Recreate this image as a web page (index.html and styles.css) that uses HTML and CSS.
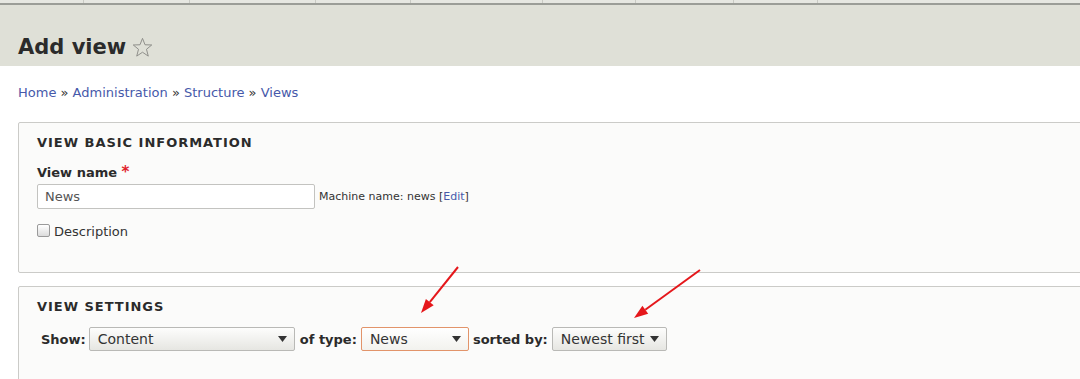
FILE: index.html
```
<!DOCTYPE html>
<html lang="en">
<head>
<meta charset="utf-8">
<title>Add view</title>
<link rel="stylesheet" href="styles.css">
</head>
<body>
<div class="tabs">
  <span class="tab w1"></span><span class="tab w2"></span><span class="tab w3"></span><span class="tab w4"></span><span class="tab w5"></span><span class="tab w6"></span><span class="tab w7"></span><span class="tab w8"></span>
</div>
<header class="page-header">
  <h1 class="title">Add view <svg class="star" width="21" height="21" viewBox="0 0 20 20"><polygon points="10,1.3 12.4,7.4 18.8,7.6 13.8,11.7 15.5,18.2 10,14.5 4.5,18.2 6.2,11.7 1.2,7.6 7.6,7.4" fill="none" stroke="#8a8a86" stroke-width="0.9"/></svg></h1>
</header>
<nav class="breadcrumb"><a href="#">Home</a> » <a href="#">Administration</a> » <a href="#">Structure</a> » <a href="#">Views</a></nav>

<section class="panel panel-basic">
  <h2 class="legend">View basic information</h2>
  <div class="label">View name <span class="req">*</span></div>
  <div class="name-row">
    <div class="text-input">News</div>
    <span class="machine">Machine name: news [<a href="#">Edit</a>]</span>
  </div>
  <div class="check-row"><span class="checkbox"></span><span>Description</span></div>
</section>

<section class="panel panel-settings">
  <h2 class="legend">View settings</h2>
  <div class="settings-row">
    <span class="inline-label first">Show:</span>
    <div class="select s-show"><span>Content</span><svg width="9" height="6" viewBox="0 0 9 6"><polygon points="0,0 9,0 4.5,6" fill="#333"/></svg></div>
    <span class="inline-label type">of type:</span>
    <div class="select s-type focus"><span>News</span><svg width="9" height="6" viewBox="0 0 9 6"><polygon points="0,0 9,0 4.5,6" fill="#333"/></svg></div>
    <span class="inline-label">sorted by:</span>
    <div class="select s-sort"><span>Newest first</span><svg width="9" height="6" viewBox="0 0 9 6"><polygon points="0,0 9,0 4.5,6" fill="#333"/></svg></div>
  </div>
</section>

<svg class="arrows" width="1080" height="379" viewBox="0 0 1080 379">
  <line x1="458" y1="267" x2="429.8" y2="302.1" stroke="#e5171b" stroke-width="2"/>
  <polygon points="421,313 433.7,305.2 425.9,299" fill="#e5171b"/>
  <line x1="700" y1="270" x2="645.3" y2="309.8" stroke="#e5171b" stroke-width="2"/>
  <polygon points="634,318 648.2,313.8 642.4,305.8" fill="#e5171b"/>
</svg>
</body>
</html>
```
FILE: styles.css
```
html, body {
  margin: 0;
  padding: 0;
}
body {
  position: relative;
  overflow: hidden;
  width: 1080px;
  height: 379px;
  background: #ffffff;
  font-family: "DejaVu Sans", "Liberation Sans", sans-serif;
  color: #333;
  font-size: 13px;
}
.tabs {
  display: flex;
  height: 3px;
  background: #e6e7e1;
  border-bottom: 2px solid #9b9d97;
}
.tab {
  border-right: 1px solid #c9cac4;
  flex: none;
}
.w1 { width: 83px; }
.w2 { width: 105px; }
.w3 { width: 125px; }
.w4 { width: 94px; }
.w5 { width: 131px; }
.w6 { width: 92px; }
.w7 { width: 97px; }
.w8 { width: 83px; }

.page-header {
  background: #dfe0d7;
  height: 61px;
  box-sizing: border-box;
  padding: 29px 18px 0;
}
.title {
  margin: 0;
  font-size: 21px;
  line-height: 26px;
  font-weight: bold;
  color: #2b2b2b;
  display: flex;
  align-items: center;
  gap: 6px;
}
.breadcrumb {
  margin: 18px 18px 0;
  font-size: 13px;
  line-height: 18px;
  color: #333;
}
a {
  color: #4659aa;
  text-decoration: none;
}
.panel {
  margin-left: 18px;
  margin-right: -40px;
  border: 1px solid #cbcbc8;
  background: #fbfbfa;
  border-radius: 2px;
  box-sizing: border-box;
}
.panel-basic {
  margin-top: 20px;
  height: 151px;
  padding: 12px 18px 0;
}
.panel-settings {
  margin-top: 13px;
  height: 120px;
  padding: 12px 18px 0;
}
.legend {
  margin: 0;
  font-size: 13px;
  line-height: 16px;
  font-weight: bold;
  text-transform: uppercase;
  letter-spacing: 0.075em;
  color: #2b2b2b;
}
.label {
  margin-top: 13px;
  font-weight: bold;
  line-height: 16px;
  color: #2b2b2b;
}
.req {
  color: #e0222b;
  font-size: 15px;
}
.name-row {
  margin-top: 3px;
  display: flex;
  align-items: center;
  gap: 4px;
}
.text-input {
  width: 278px;
  height: 25px;
  box-sizing: border-box;
  border: 1px solid #c3c3c0;
  border-radius: 2px;
  background: #fff;
  padding: 0 7px;
  line-height: 23px;
  font-size: 13px;
  color: #555;
}
.machine {
  font-size: 11px;
  color: #333;
}
.check-row {
  margin-top: 14px;
  display: flex;
  align-items: center;
  gap: 4px;
  line-height: 18px;
}
.checkbox {
  width: 11px;
  height: 11px;
  border: 1px solid #9a9a9a;
  border-radius: 2px;
  background: linear-gradient(#ffffff, #dcdcdc);
  margin-top: -4px;
}
.settings-row {
  margin-top: 12px;
  display: flex;
  align-items: center;
}
.inline-label {
  font-weight: bold;
  margin: 0 4px 0 4px;
  color: #2b2b2b;
}
.inline-label.first {
  margin-left: 4px;
  margin-right: 3px;
}
.inline-label.type {
  margin-left: 5px;
}
.select {
  height: 24px;
  box-sizing: border-box;
  border: 1px solid #b9b9b6;
  border-radius: 2px;
  background: linear-gradient(#fdfdfc, #e6e6e2);
  display: flex;
  align-items: center;
  justify-content: space-between;
  padding: 0 7px 0 8px;
  font-size: 14px;
  color: #333;
}
.s-show { width: 206px; }
.s-type { width: 108px; }
.s-sort { width: 115px; }
.select.focus {
  border-color: #e2946a;
  background: linear-gradient(#ffffff, #f2f2ee);
}
.arrows {
  position: absolute;
  left: 0;
  top: 0;
  pointer-events: none;
}
```
